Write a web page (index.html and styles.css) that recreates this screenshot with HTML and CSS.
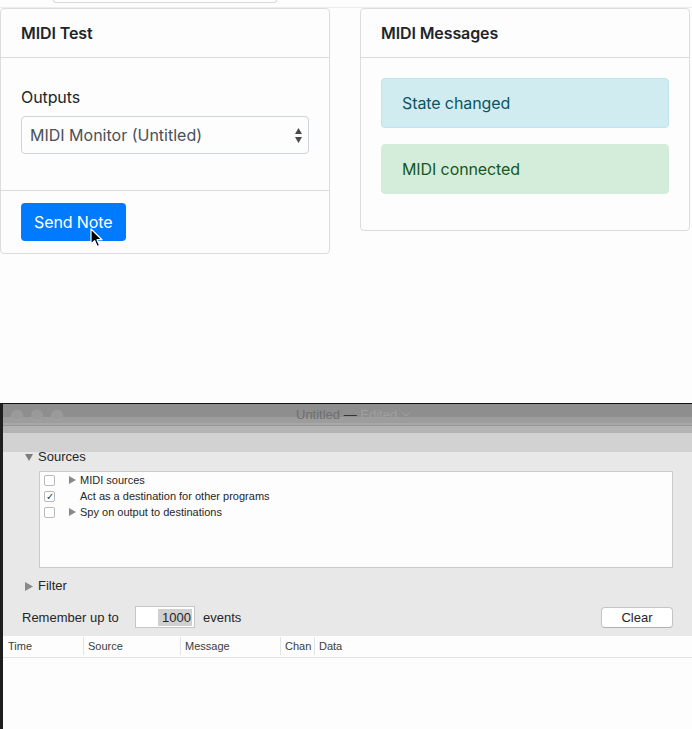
FILE: index.html
```html
<!DOCTYPE html>
<html>
<head>
<meta charset="utf-8">
<link rel="stylesheet" href="styles.css">
</head>
<body>
<div class="web">
  <div class="topstrip"><div class="tab"></div></div>
  <div class="cards">
    <div class="card">
      <div class="card-header">MIDI Test</div>
      <div class="card-body form-body">
        <div class="label">Outputs</div>
        <div class="select">
          <span>MIDI Monitor (Untitled)</span>
          <svg class="sel-arrows" width="7" height="15" viewBox="0 0 7 15"><path d="M3.5 0 L7 6 L0 6 Z M0 9 L7 9 L3.5 15 Z" fill="#4a4a4a"/></svg>
        </div>
      </div>
      <div class="card-footer">
        <div class="btn">Send Note</div>
      </div>
    </div>
    <div class="card">
      <div class="card-header">MIDI Messages</div>
      <div class="card-body">
        <div class="alert alert-info">State changed</div>
        <div class="alert alert-success">MIDI connected</div>
      </div>
    </div>
  </div>
  <svg class="cursor" width="14" height="20" viewBox="0 0 14 20"><path d="M1 1 L1 16 L4.6 12.6 L7.2 18.6 L9.6 17.6 L7 11.7 L12 11.7 Z" fill="#000" stroke="#fff" stroke-width="1.2" stroke-linejoin="round"/></svg>
</div>
<div class="window">
  <div class="titlebar">
    <div class="lights"><span class="light"></span><span class="light"></span><span class="light"></span></div>
    <div class="title"><span class="t-name">Untitled</span> <span class="t-dash">—</span> <span class="t-edited">Edited</span><svg class="t-chev" width="8" height="5" viewBox="0 0 8 5"><path d="M0.5 0.5 L4 4 L7.5 0.5" fill="none" stroke="#9c9c9c" stroke-width="1.1"/></svg></div>
  </div>
  <div class="content">
    <div class="disc-row sources-row">
      <svg class="tri" width="8" height="7" viewBox="0 0 8 7"><path d="M0 0 L8 0 L4 7 Z" fill="#7d7d7d"/></svg>
      <span>Sources</span>
    </div>
    <div class="listbox">
      <div class="lrow"><span class="cb"></span><span class="rtri"><svg width="7" height="8" viewBox="0 0 7 8"><path d="M0 0 L7 4 L0 8 Z" fill="#8a8a8a"/></svg></span><span>MIDI sources</span></div>
      <div class="lrow"><span class="cb checked">✓</span><span class="rtri"></span><span>Act as a destination for other programs</span></div>
      <div class="lrow"><span class="cb"></span><span class="rtri"><svg width="7" height="8" viewBox="0 0 7 8"><path d="M0 0 L7 4 L0 8 Z" fill="#8a8a8a"/></svg></span><span>Spy on output to destinations</span></div>
    </div>
    <div class="disc-row filter-row">
      <svg class="tri" width="8" height="9" viewBox="0 0 8 9"><path d="M0 0 L8 4.5 L0 9 Z" fill="#8a8a8a"/></svg>
      <span>Filter</span>
    </div>
    <div class="remember">
      <span class="rem-label">Remember up to</span>
      <span class="num-input"><span class="num-sel">1000</span></span>
      <span class="events">events</span>
      <span class="clear-btn">Clear</span>
    </div>
  </div>
  <div class="thead">
    <div class="th th-time">Time</div>
    <div class="th">Source</div>
    <div class="th">Message</div>
    <div class="th">Chan</div>
    <div class="th">Data</div>
  </div>
  <div class="tbody"></div>
</div>
</body>
</html>
```

FILE: styles.css
```css
* { box-sizing: border-box; }
html, body { margin: 0; padding: 0; }
body {
  background: #fdfdfd;
  width: 692px;
  height: 729px;
  overflow: hidden;
  font-family: Inter, "Noto Sans", sans-serif;
}
.web {
  position: relative;
  height: 403px;
}
.topstrip {
  height: 8px;
  border-bottom: 1px solid #ececec;
}
.tab {
  margin-left: 53px;
  width: 224px;
  height: 3px;
  border: 1px solid #d8d8d8;
  border-top: none;
  border-radius: 0 0 3px 3px;
}
.cards {
  display: flex;
  gap: 30px;
  align-items: flex-start;
}
.card {
  width: 330px;
  border: 1px solid #dcdcdc;
  border-radius: 4px;
  background: #fdfdfd;
}
.card-header {
  padding: 12px 20px;
  font-size: 16px;
  line-height: 24px;
  font-weight: 600;
  color: #212529;
  border-bottom: 1px solid #dcdcdc;
  letter-spacing: -0.1px;
}
.card-body {
  padding: 20px;
}
.form-body {
  padding-top: 27px;
}
.label {
  font-size: 16px;
  line-height: 24px;
  color: #212529;
  margin-bottom: 7px;
  letter-spacing: -0.1px;
}
.select {
  height: 38px;
  border: 1px solid #ced4da;
  border-radius: 4px;
  display: flex;
  align-items: center;
  padding: 0 6px 0 8px;
  font-size: 16px;
  color: #495057;
  margin-bottom: 16px;
}
.select span { flex: 1; }
.card-footer {
  border-top: 1px solid #dcdcdc;
  padding: 12px 20px;
}
.btn {
  display: inline-block;
  height: 38px;
  line-height: 38px;
  padding: 0 13px;
  background: #007bff;
  color: #fff;
  border-radius: 4px;
  font-size: 16px;
  letter-spacing: -0.1px;
}
.alert {
  padding: 12px 20px;
  border: 1px solid transparent;
  border-radius: 4px;
  font-size: 16px;
  line-height: 24px;
  margin-bottom: 16px;
  letter-spacing: -0.1px;
}
.alert-info {
  background: #d1ecf1;
  border-color: #bee5eb;
  color: #0c5460;
}
.alert-success {
  background: #d4edda;
  border-color: #d4edda;
  color: #155724;
}
.cursor {
  position: absolute;
  left: 90px;
  top: 228px;
}

/* mac window */
.window {
  height: 326px;
  border-top: 1px solid #111;
  border-left: 3px solid #1e1e1e;
  font-family: "Liberation Sans", Arial, sans-serif;
  color: #262626;
  display: flex;
  flex-direction: column;
}
.titlebar {
  height: 48px;
  background: linear-gradient(to bottom,
    #8e8e8e 0, #8e8e8e 13px,
    #9d9d9d 13px, #9d9d9d 19px,
    #a8a8a8 19px, #a8a8a8 21px,
    #979797 21px, #979797 22px,
    #b3b3b3 22px, #b3b3b3 29px,
    #d2d2d2 29px, #d2d2d2 48px);
  display: flex;
  align-items: flex-start;
  padding-top: 5px;
}
.lights {
  display: flex;
  gap: 8px;
  margin-left: 8px;
}
.light {
  width: 12px;
  height: 12px;
  border-radius: 50%;
  background: #9a9a9a;
  box-shadow: inset 0 -1px 0 #a4a4a4, inset 0 1px 0 #929292;
}
.title {
  margin-left: 233px;
  font-size: 13px;
  line-height: 12px;
  white-space: pre;
}
.t-name { color: #6e6e6e; }
.t-dash { color: #333; }
.t-edited { color: #a0a0a0; }
.t-chev { margin-left: 5px; vertical-align: 2px; }
.content {
  height: 184px;
  background: #e8e8e8;
  display: flex;
  flex-direction: column;
}
.disc-row {
  display: flex;
  align-items: center;
  height: 10px;
  line-height: 10px;
  font-size: 13px;
  margin-left: 22px;
}
.disc-row .tri { margin-right: 5px; }
.listbox {
  margin: 9px 0 0 36px;
  width: 634px;
  height: 97px;
  background: #fdfdfd;
  border: 1px solid #cbcbcb;
  padding-left: 4px;
}
.lrow {
  height: 16px;
  display: flex;
  align-items: center;
  font-size: 11px;
}
.cb {
  width: 11px;
  height: 11px;
  border: 1px solid #b9b9b9;
  border-radius: 2px;
  background: #fff;
  font-size: 10px;
  line-height: 9px;
  text-align: center;
  color: #333;
}
.rtri {
  width: 25px;
  padding-left: 14px;
  display: flex;
  align-items: center;
}
.filter-row { margin-top: 13px; }
.remember {
  margin-top: 15px;
  height: 22px;
  display: flex;
  align-items: center;
  font-size: 13px;
  padding-left: 19px;
  padding-right: 19px;
}
.rem-label { width: 113px; }
.num-input {
  width: 60px;
  height: 22px;
  background: #fff;
  border: 1px solid #c6c6c6;
  display: flex;
  justify-content: flex-end;
  align-items: center;
  padding-right: 2px;
}
.num-sel {
  background: #d0d0d0;
  height: 17px;
  line-height: 17px;
  padding: 0 1px;
  width: 34px;
  text-align: right;
}
.events { margin-left: 8px; }
.clear-btn {
  margin-left: auto;
  width: 72px;
  height: 21px;
  line-height: 19px;
  text-align: center;
  background: #fff;
  border: 1px solid #c4c4c4;
  border-bottom-color: #b0b0b0;
  border-radius: 4px;
}
.thead {
  height: 22px;
  background: #fdfdfd;
  border-bottom: 1px solid #e2e2e2;
  display: grid;
  grid-template-columns: 80px 97px 100px 34px 1fr;
  align-items: start;
  padding-top: 1px;
  font-size: 11px;
  color: #3c3c3c;
}
.th {
  height: 18px;
  line-height: 18px;
  border-left: 1px solid #e3e3e3;
  padding-left: 4px;
}
.th-time { border-left: none; padding-left: 5px; }
.tbody { flex: 1; background: #fdfdfd; }
```
